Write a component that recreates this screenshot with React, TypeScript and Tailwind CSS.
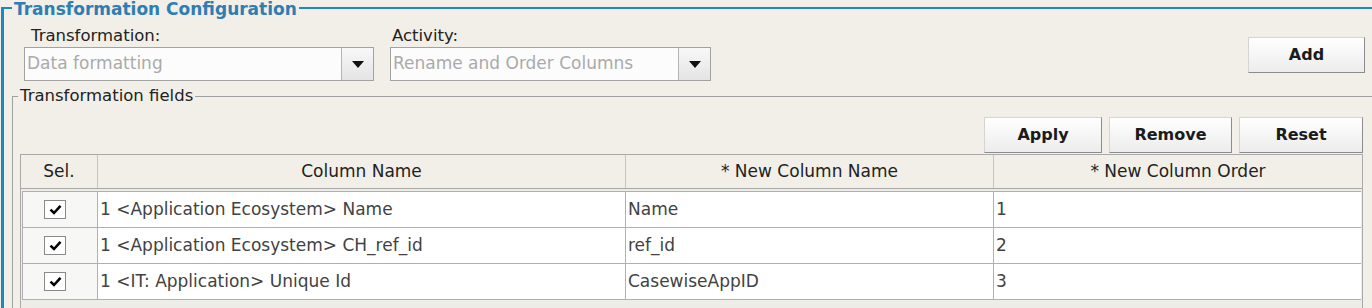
import React from 'react';

interface FieldRow {
    source: string;
    newName: string;
    order: string;
}

const fieldRows: FieldRow[] = [
    { source: '1 <Application Ecosystem> Name', newName: 'Name', order: '1' },
    { source: '1 <Application Ecosystem> CH_ref_id', newName: 'ref_id', order: '2' },
    { source: '1 <IT: Application> Unique Id', newName: 'CasewiseAppID', order: '3' },
];

function ComboBox({ value, width }: { value: string; width: string }) {
    return (
        <div className={`${width} h-[34px] flex border border-[#a2a2a2] bg-[#fcfcfc]`}>
            <div className="flex-1 flex items-center pl-[2px] text-[17px] text-[#aaaaaa] whitespace-nowrap overflow-hidden">
                {value}
            </div>
            <div className="w-[32px] flex items-center justify-center border-l border-[#b4b4b4] bg-gradient-to-b from-[#f8f8f8] to-[#e4e4e4]">
                <svg width="12" height="7" viewBox="0 0 12 7">
                    <path d="M0 0 L12 0 L6 7 Z" fill="#111" />
                </svg>
            </div>
        </div>
    );
}

function ToolButton({ label, width }: { label: string; width: string }) {
    return (
        <button
            className={`${width} h-[36px] flex items-center justify-center text-[16px] font-bold text-[#1b1b1b] bg-gradient-to-b from-[#ffffff] to-[#ececec] border border-[#d4d4d4] border-r-[#8c8c8c] border-b-[#8c8c8c]`}
        >
            {label}
        </button>
    );
}

function CheckCell() {
    return (
        <div className="w-[22px] h-[19px] border border-[#8a8a8a] bg-white flex items-center justify-center">
            <svg width="13" height="11" viewBox="0 0 13 11">
                <path d="M1.5 5.6 L5 9 L11.5 1.8" fill="none" stroke="#000" strokeWidth="2.6" />
            </svg>
        </div>
    );
}

export default function App() {
    return (
        <div className="w-[1372px] h-[308px] overflow-hidden bg-[#f1efe8] font-['DejaVu_Sans',sans-serif] text-[#222]">
            {/* Transformation Configuration group */}
            <fieldset className="mt-[1px] ml-[1px] border-l-[3px] border-t-2 border-[#1f88bd] h-[320px]">
                <legend className="ml-[8px] px-[2px] leading-[14px] text-[17px] font-bold text-[#2f7db3]">
                    <span className="relative top-[1px]">Transformation Configuration</span>
                </legend>

                <div className="mt-[11px] pl-[20px] pr-[7px] flex items-start">
                    <div className="flex flex-col">
                        <span className="pl-[7px] text-[16.5px] leading-[19px] mb-[2px]">Transformation:</span>
                        <ComboBox value="Data formatting" width="w-[350px]" />
                    </div>
                    <div className="flex flex-col ml-[16px]">
                        <span className="pl-[2px] text-[16.5px] leading-[19px] mb-[2px]">Activity:</span>
                        <ComboBox value="Rename and Order Columns" width="w-[321px]" />
                    </div>
                    <div className="ml-auto mt-[11px]">
                        <ToolButton label="Add" width="w-[117px]" />
                    </div>
                </div>

                {/* Transformation fields group */}
                <fieldset className="mt-[6px] ml-[8px] border-l border-t border-[#a0a0a0]">
                    <legend className="ml-[5px] px-[2px] leading-[18px] text-[16.5px]">Transformation fields</legend>

                    <div className="pl-[7px] pr-[9px]">
                        <div className="mt-[12px] flex justify-end gap-[7px]">
                            <ToolButton label="Apply" width="w-[118px]" />
                            <ToolButton label="Remove" width="w-[123px]" />
                            <ToolButton label="Reset" width="w-[124px]" />
                        </div>

                        <div className="mt-[1px] border border-[#a9a9a9] bg-[#eeece6] h-[160px]">
                            <div className="flex h-[34px] bg-[#f1efe8] border-b border-[#a9a9a9] text-[17px] text-[#222]">
                                <div className="w-[77px] flex items-center justify-center border-r border-[#c4c4c4]">Sel.</div>
                                <div className="w-[528px] flex items-center justify-center border-r border-[#c4c4c4]">Column Name</div>
                                <div className="w-[368px] flex items-center justify-center border-r border-[#c4c4c4]">* New Column Name</div>
                                <div className="flex-1 flex items-center justify-center">* New Column Order</div>
                            </div>

                            <div className="mx-[1px] mt-[2px] border-l border-t border-[#b0b0b0]">
                                {fieldRows.map(row => (
                                    <div key={row.order} className="flex h-[36px] border-b border-[#b0b0b0] text-[17px] text-[#424242]">
                                        <div className="w-[75px] flex items-center pl-[21px] bg-[#f7f7f5] border-r border-[#b0b0b0]">
                                            <CheckCell />
                                        </div>
                                        <div className="w-[528px] flex items-center pl-[2px] bg-white border-r border-[#b0b0b0] whitespace-nowrap">
                                            {row.source}
                                        </div>
                                        <div className="w-[368px] flex items-center pl-[2px] bg-white border-r border-[#b0b0b0]">
                                            {row.newName}
                                        </div>
                                        <div className="flex-1 flex items-center pl-[2px] bg-white">{row.order}</div>
                                    </div>
                                ))}
                            </div>
                        </div>
                    </div>
                </fieldset>
            </fieldset>
        </div>
    );
}
